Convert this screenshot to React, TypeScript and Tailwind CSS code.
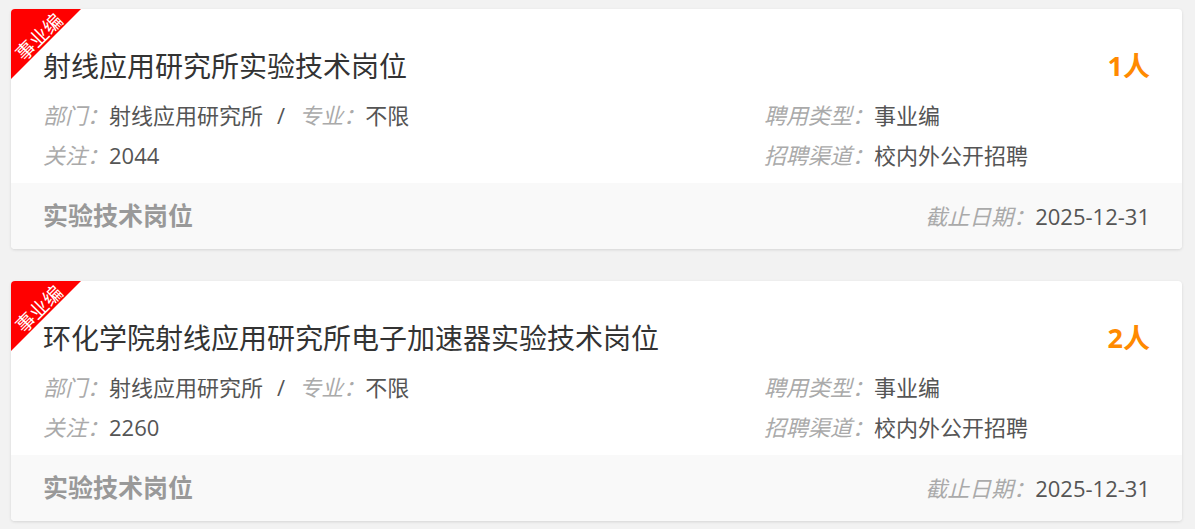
const font = "font-['Open_Sans','Noto_Sans_CJK_SC',sans-serif]";

interface Job {
  title: string;
  count: string;
  dept: string;
  major: string;
  follow: string;
  type: string;
  channel: string;
  category: string;
  deadline: string;
}

const jobs: Job[] = [
  {
    title: "射线应用研究所实验技术岗位",
    count: "1人",
    dept: "射线应用研究所",
    major: "不限",
    follow: "2044",
    type: "事业编",
    channel: "校内外公开招聘",
    category: "实验技术岗位",
    deadline: "2025-12-31",
  },
  {
    title: "环化学院射线应用研究所电子加速器实验技术岗位",
    count: "2人",
    dept: "射线应用研究所",
    major: "不限",
    follow: "2260",
    type: "事业编",
    channel: "校内外公开招聘",
    category: "实验技术岗位",
    deadline: "2025-12-31",
  },
];

function Field({ label, value }: { label: string; value: string }) {
  return (
    <span>
      <span className="italic text-[#aaaaaa]">{label}：</span>
      <span className="text-[#555555]">{value}</span>
    </span>
  );
}

function JobCard({ job }: { job: Job }) {
  return (
    <div className="relative h-[240px] overflow-hidden rounded-[4px] bg-white shadow-[0_1px_3px_rgba(0,0,0,0.12)]">
      <div className="absolute left-0 top-0 h-[70px] w-[70px] bg-[#ff0000] [clip-path:polygon(0_0,100%_0,0_100%)]" />
      <div className="absolute left-[-12px] top-[17px] w-[80px] -rotate-45 text-center text-[19px] leading-[22px] text-white">
        事业编
      </div>

      <div className="px-8 pt-[37px] pb-[8px]">
        <div className="flex h-[40px] items-center justify-between">
          <span className="text-[28px] text-[#333333]">{job.title}</span>
          <span className="text-[27px] font-bold text-[#ff8a00]">{job.count}</span>
        </div>
        <div className="mt-[9px] flex text-[22px] leading-[40px]">
          <div className="flex-1">
            <div>
              <Field label="部门" value={job.dept} />
              <span className="mx-[14px] text-[#555555]">/</span>
              <Field label="专业" value={job.major} />
            </div>
            <div>
              <Field label="关注" value={job.follow} />
            </div>
          </div>
          <div className="w-[386px]">
            <div>
              <Field label="聘用类型" value={job.type} />
            </div>
            <div>
              <Field label="招聘渠道" value={job.channel} />
            </div>
          </div>
        </div>
      </div>

      <div className="flex h-[66px] items-center justify-between bg-[#f9f9f9] px-8">
        <span className="text-[25px] font-bold text-[#999999]">{job.category}</span>
        <span className="text-[22px]">
          <Field label="截止日期" value={job.deadline} />
        </span>
      </div>
    </div>
  );
}

export default function App() {
  return (
    <div className={`min-h-[529px] w-[1195px] bg-[#f2f2f2] pl-[11px] pr-[13px] pt-[9px] ${font}`}>
      <div className="flex flex-col gap-[32px]">
        {jobs.map((job) => (
          <JobCard key={job.title} job={job} />
        ))}
      </div>
    </div>
  );
}
